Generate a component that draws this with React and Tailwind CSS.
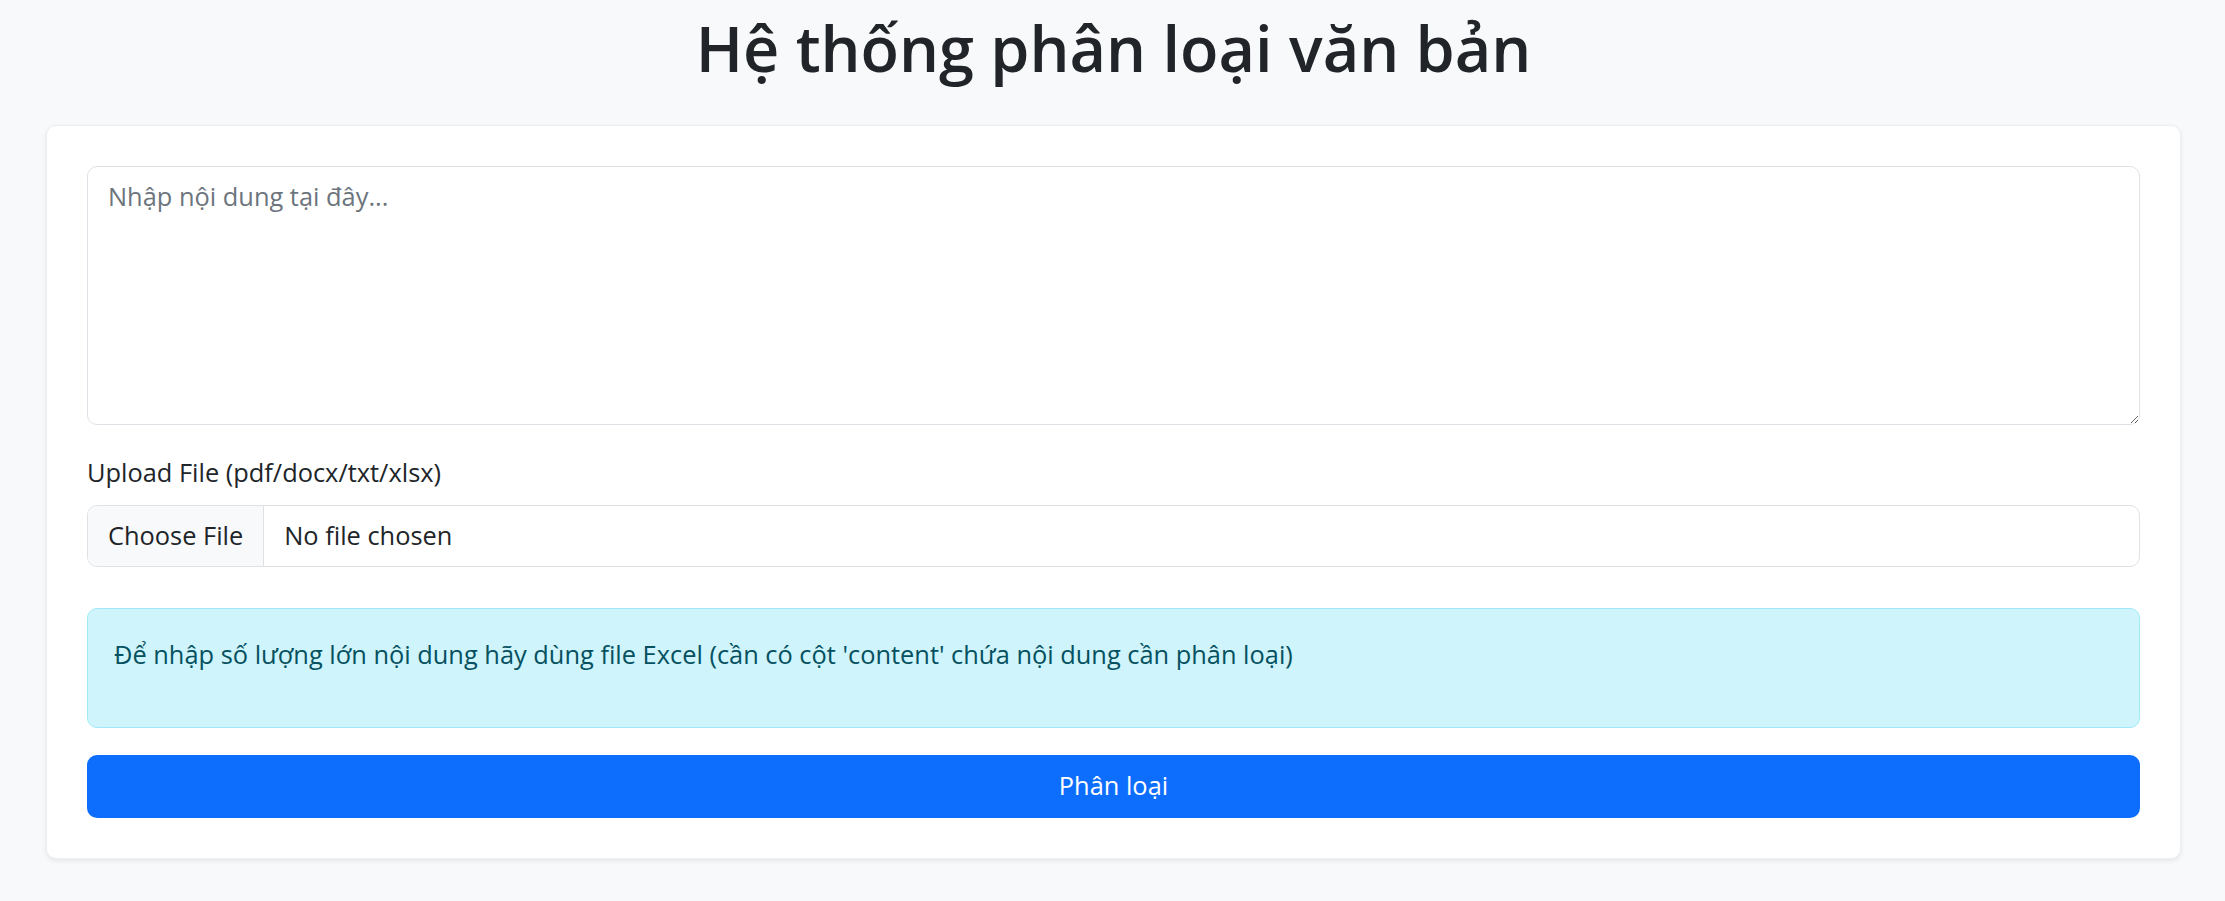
import React, { useState } from 'react';

export default function App() {
    const [content, setContent] = useState('');

    return (
        <div className="min-h-screen bg-[#f8f9fa] pl-[46px] pr-[44px] pt-[8px] font-['Open_Sans','Noto_Sans',sans-serif] text-[#212529]">
            <h1 className="text-center text-[63px] leading-[79px] font-semibold mb-[38px]">
                Hệ thống phân loại văn bản
            </h1>

            <div className="bg-white rounded-[10px] border border-[#eceef0] shadow-[0_2px_5px_rgba(0,0,0,0.08)] p-[40px]">
                {/* Content */}
                <textarea
                    value={content}
                    onChange={(e) => setContent(e.target.value)}
                    placeholder="Nhập nội dung tại đây..."
                    className="block w-full h-[259px] border border-[#dee2e6] rounded-[10px] px-[20px] py-[10px] text-[25.4px] leading-[39.6px] text-[#212529] placeholder:text-[#6c757d] outline-none"
                />

                {/* Upload */}
                <label className="block mt-[28px] mb-[12px] text-[25.4px] leading-[39.6px]">
                    Upload File (pdf/docx/txt/xlsx)
                </label>
                <div className="flex h-[62px] border border-[#dee2e6] rounded-[10px] overflow-hidden text-[25.4px] leading-[39.6px]">
                    <span className="flex items-center px-[20px] bg-[#f8f9fa] border-r border-[#dee2e6]">
                        Choose File
                    </span>
                    <span className="flex items-center px-[20px]">No file chosen</span>
                </div>

                {/* Info */}
                <div className="mt-[41px] h-[120px] bg-[#cff4fc] border border-[#9eeaf9] rounded-[10px] px-[26px] pt-[26px] text-[#055160] text-[25.4px] leading-[39.6px]">
                    <p>Để nhập số lượng lớn nội dung hãy dùng file Excel (cần có cột 'content' chứa nội dung cần phân loại)</p>
                </div>

                <button
                    type="button"
                    className="mt-[27px] w-full h-[63px] bg-[#0d6efd] text-white rounded-[10px] text-[25.4px] leading-[39.6px]"
                >
                    Phân loại
                </button>
            </div>
        </div>
    );
}
